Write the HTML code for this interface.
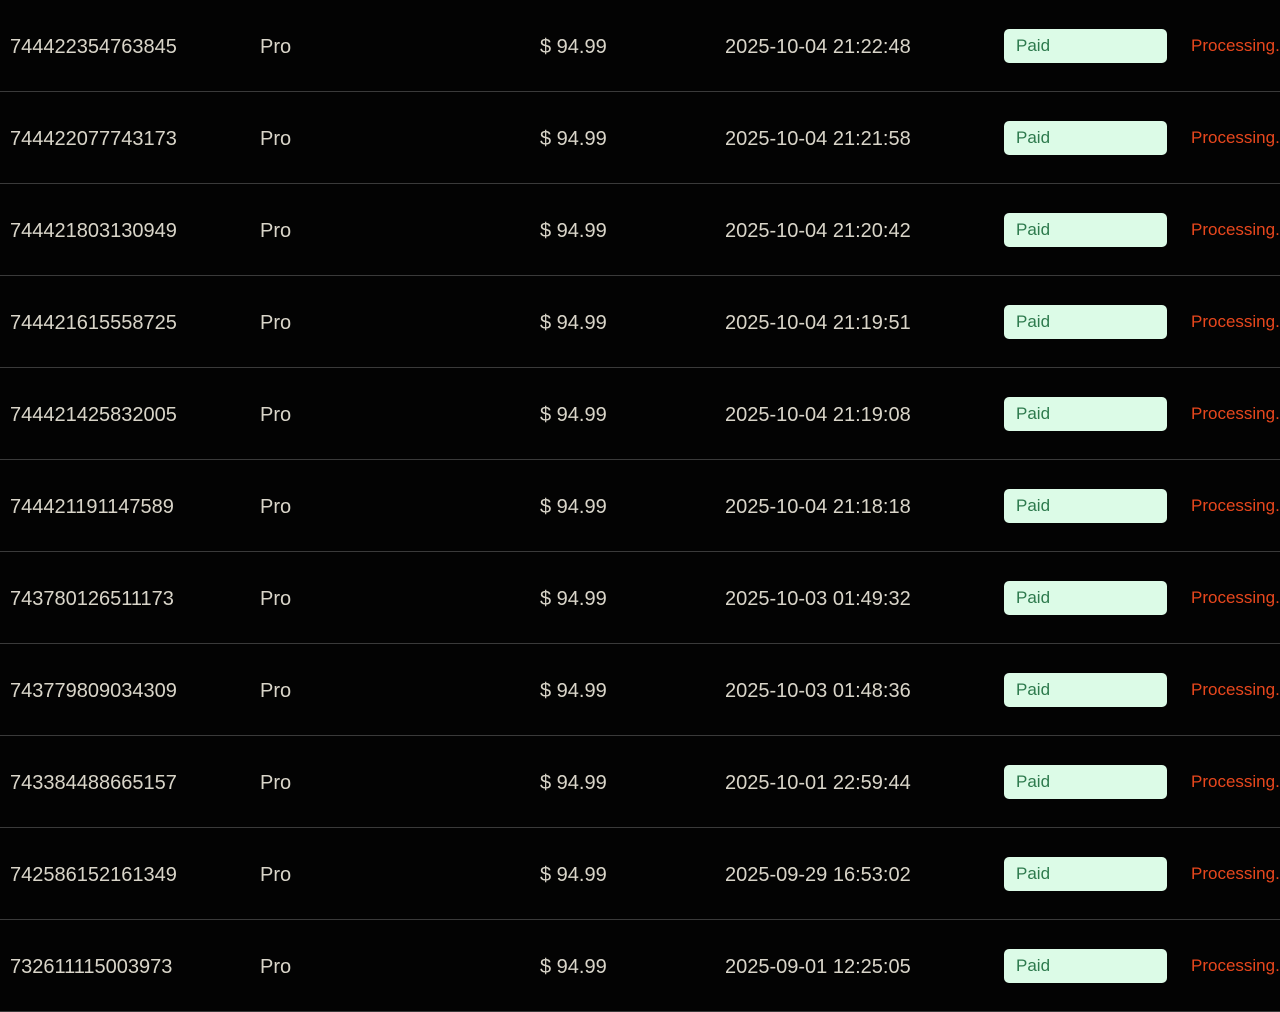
<!DOCTYPE html>
<html><head><meta charset="utf-8"><style>
html,body{margin:0;padding:0;background:#030303;width:1280px;height:968px;overflow:hidden;font-family:"Liberation Sans",sans-serif}
.r{position:absolute;left:0;width:1280px;height:92px;border-bottom:1px solid #3a3a3a;box-sizing:border-box}
.t{position:absolute;top:36px;font-size:20px;line-height:22px;color:#d9d5c9;white-space:nowrap}
.b{position:absolute;left:1004px;top:29px;width:163px;height:34px;background:#dcfbe7;border-radius:5px;box-sizing:border-box}
.b span{position:absolute;left:12px;top:8px;font-size:17px;line-height:18px;color:#2d7a4d}
.p{position:absolute;left:1191px;top:37px;font-size:17px;line-height:18px;color:#e8471d;white-space:nowrap}
</style></head><body>
<div class="r" style="top:0"><div class="t" style="left:10px">744422354763845</div><div class="t" style="left:260px">Pro</div><div class="t" style="left:540px">$ 94.99</div><div class="t" style="left:725px">2025-10-04 21:22:48</div><div class="b"><span>Paid</span></div><div class="p">Processing...</div></div>
<div class="r" style="top:92px"><div class="t" style="left:10px">744422077743173</div><div class="t" style="left:260px">Pro</div><div class="t" style="left:540px">$ 94.99</div><div class="t" style="left:725px">2025-10-04 21:21:58</div><div class="b"><span>Paid</span></div><div class="p">Processing...</div></div>
<div class="r" style="top:184px"><div class="t" style="left:10px">744421803130949</div><div class="t" style="left:260px">Pro</div><div class="t" style="left:540px">$ 94.99</div><div class="t" style="left:725px">2025-10-04 21:20:42</div><div class="b"><span>Paid</span></div><div class="p">Processing...</div></div>
<div class="r" style="top:276px"><div class="t" style="left:10px">744421615558725</div><div class="t" style="left:260px">Pro</div><div class="t" style="left:540px">$ 94.99</div><div class="t" style="left:725px">2025-10-04 21:19:51</div><div class="b"><span>Paid</span></div><div class="p">Processing...</div></div>
<div class="r" style="top:368px"><div class="t" style="left:10px">744421425832005</div><div class="t" style="left:260px">Pro</div><div class="t" style="left:540px">$ 94.99</div><div class="t" style="left:725px">2025-10-04 21:19:08</div><div class="b"><span>Paid</span></div><div class="p">Processing...</div></div>
<div class="r" style="top:460px"><div class="t" style="left:10px">744421191147589</div><div class="t" style="left:260px">Pro</div><div class="t" style="left:540px">$ 94.99</div><div class="t" style="left:725px">2025-10-04 21:18:18</div><div class="b"><span>Paid</span></div><div class="p">Processing...</div></div>
<div class="r" style="top:552px"><div class="t" style="left:10px">743780126511173</div><div class="t" style="left:260px">Pro</div><div class="t" style="left:540px">$ 94.99</div><div class="t" style="left:725px">2025-10-03 01:49:32</div><div class="b"><span>Paid</span></div><div class="p">Processing...</div></div>
<div class="r" style="top:644px"><div class="t" style="left:10px">743779809034309</div><div class="t" style="left:260px">Pro</div><div class="t" style="left:540px">$ 94.99</div><div class="t" style="left:725px">2025-10-03 01:48:36</div><div class="b"><span>Paid</span></div><div class="p">Processing...</div></div>
<div class="r" style="top:736px"><div class="t" style="left:10px">743384488665157</div><div class="t" style="left:260px">Pro</div><div class="t" style="left:540px">$ 94.99</div><div class="t" style="left:725px">2025-10-01 22:59:44</div><div class="b"><span>Paid</span></div><div class="p">Processing...</div></div>
<div class="r" style="top:828px"><div class="t" style="left:10px">742586152161349</div><div class="t" style="left:260px">Pro</div><div class="t" style="left:540px">$ 94.99</div><div class="t" style="left:725px">2025-09-29 16:53:02</div><div class="b"><span>Paid</span></div><div class="p">Processing...</div></div>
<div class="r" style="top:920px"><div class="t" style="left:10px">732611115003973</div><div class="t" style="left:260px">Pro</div><div class="t" style="left:540px">$ 94.99</div><div class="t" style="left:725px">2025-09-01 12:25:05</div><div class="b"><span>Paid</span></div><div class="p">Processing...</div></div>
</body></html>
